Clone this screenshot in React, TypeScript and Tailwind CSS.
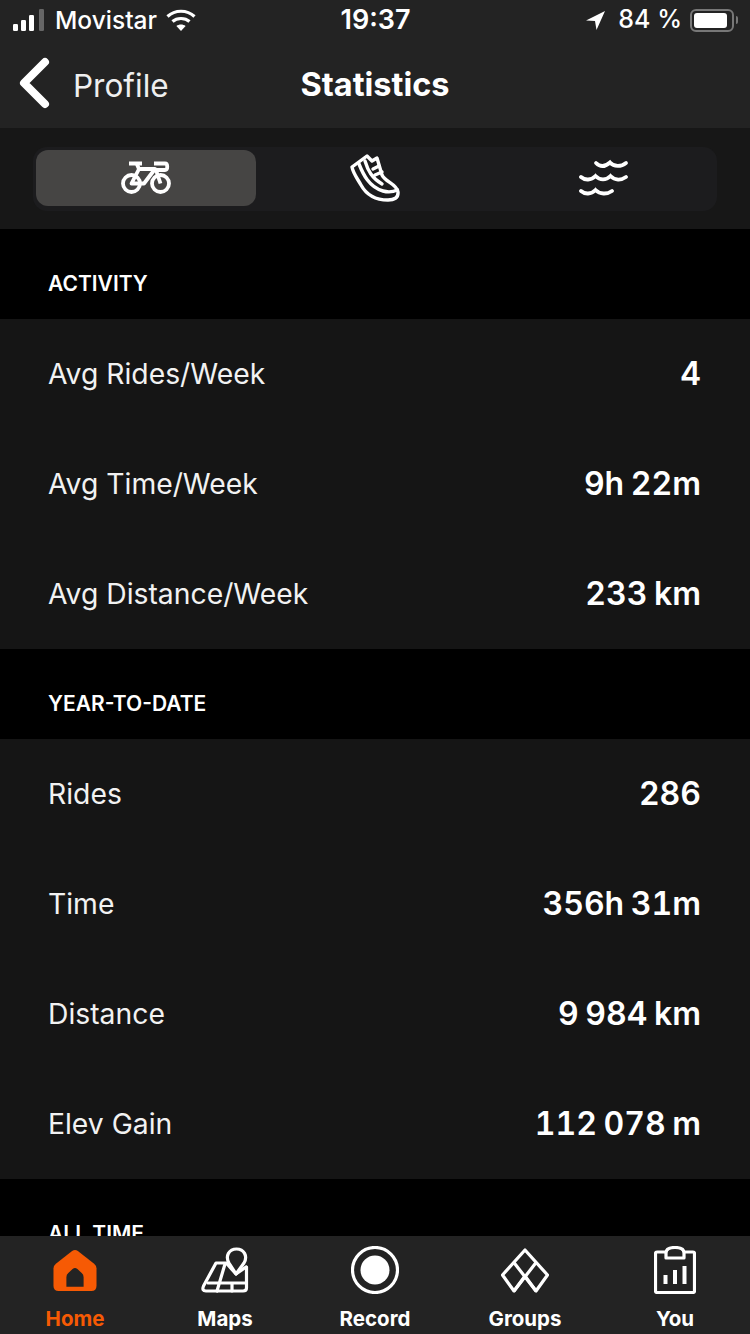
const FONT = "font-['Inter','Liberation_Sans',sans-serif]"

function SignalIcon() {
  return (
    <svg width="34" height="22" viewBox="0 0 34 22" fill="#fff">
      <rect x="0" y="15" width="5" height="7" rx="1.2" />
      <rect x="8" y="11" width="5" height="11" rx="1.2" />
      <rect x="16" y="6" width="5" height="16" rx="1.2" />
      <rect x="26" y="0" width="5" height="22" rx="1.2" fill="#666" />
    </svg>
  )
}

function WifiIcon() {
  return (
    <svg width="30" height="22" viewBox="0 0 30 22" fill="none" stroke="#fff" strokeWidth="3.2">
      <path d="M1.5 7.5C9 .5 21 .5 28.5 7.5" />
      <path d="M6.5 12.5C11 8.5 19 8.5 23.5 12.5" />
      <path d="M15 22l-4.6-5c2.5-2 6.7-2 9.200 0z" fill="#fff" stroke="none" />
    </svg>
  )
}

function LocationIcon() {
  return (
    <svg width="20" height="20" viewBox="0 0 20 20" fill="#fff">
      <path d="M19 1 L0 10.500 L9 11 L10.500 20 Z" />
    </svg>
  )
}

function BatteryIcon() {
  return (
    <div className="flex items-center gap-[2px]">
      <div className="w-[44px] h-[23px] rounded-[6px] border-2 border-[#777] p-[2px]">
        <div className="w-[33px] h-full rounded-[3px] bg-white" />
      </div>
      <div className="w-[2px] h-[8px] rounded-r-sm bg-[#777]" />
    </div>
  )
}

function BikeIcon() {
  return (
    <svg width="50" height="34" viewBox="0 0 50 34" fill="none" stroke="#fff" strokeWidth="3.8">
      <circle cx="10.500" cy="22.500" r="8.500" />
      <circle cx="39.500" cy="22.500" r="8.500" />
      <path d="M10.500 22.500 L18 8 L34 8 L23 22.500 Z" strokeLinejoin="round" />
      <path d="M8 2.500 H21 M15.500 2.500 L18 8" />
      <path d="M33 2.500 H44 C47 2.500 47 9 44 9 H35 L39.500 22.500" />
    </svg>
  )
}

function ShoeIcon() {
  return (
    <svg width="50" height="48" viewBox="0 0 50 48" fill="none" stroke="#fff" strokeWidth="3.4" strokeLinejoin="round" strokeLinecap="round">
      <path d="M2 13 L17 2 L22 7 L27 4 L32 21 C35 28 47 30 48 38 C48.500 44 44 46 38 46 C26 46 17 42 11 31 C7 24 3 19 2 13 Z" />
      <path d="M9 10 C13 20 19 33 33 37 C38 38.500 43 38 47.500 36" />
      <path d="M15 7 C18 17 22 24 32 30" />
      <path d="M23 15 L29 12 M25 21 L32 18" />
    </svg>
  )
}

function WavesIcon() {
  return (
    <svg width="50" height="38" viewBox="0 0 50 38" fill="none" stroke="#fff" strokeWidth="3.8" strokeLinecap="round">
      <path d="M17 4 C21 8 26 8 31 3.500 C35 8 42 8 47 4" />
      <path d="M2 18 C6 21.500 12 21.500 16.500 17 C21 21.500 27 21.500 31.500 17 C36 21.500 42 21.500 47 18" />
      <path d="M2 32 C6 35.500 12 35.500 16.500 31 C21 35.500 28 35.500 33 32" />
    </svg>
  )
}

function HomeIcon() {
  return (
    <svg width="44" height="43" viewBox="0 0 46 44">
      <path d="M20 1.500 Q23 -.5 26 1.500 L43 15 Q45.500 17 45.500 20 V38 Q45.500 43.500 40 43.500 H6 Q.5 43.500 .5 38 V20 Q.5 17 3 15 Z" fill="#f65a04" />
      <path d="M14 39 V29 Q14 26 16 24.500 L20.500 20.500 Q23 18.500 25.500 20.500 L30 24.500 Q32 26 32 29 V39 Z" fill="#232323" />
    </svg>
  )
}

function MapsIcon() {
  return (
    <svg width="48" height="46" viewBox="0 0 48 46" fill="none" stroke="#fff" strokeWidth="3.2" strokeLinejoin="round" strokeLinecap="round">
      <path d="M35 27 L28 16 C24 9 28 2 35.500 2 C43 2 47 9 43 16 Z" />
      <path d="M26 16 H15 L2.500 39 Q.5 44 5 44 H42 Q45.500 44 45.500 41 V20" />
      <path d="M27 18 L35 27 L45 20 M24 17 L16 44 M7 36 H45 M31 36 V44" />
    </svg>
  )
}

function RecordIcon() {
  return (
    <svg width="48" height="48" viewBox="0 0 48 48">
      <circle cx="24" cy="24" r="22.500" fill="none" stroke="#fff" strokeWidth="3.200" />
      <circle cx="24" cy="24" r="14.500" fill="#fff" />
    </svg>
  )
}

function GroupsIcon() {
  return (
    <svg width="48" height="45" viewBox="0 0 48 45" fill="none" stroke="#fff" strokeWidth="3.200" strokeLinejoin="round">
      <path d="M24 2 L46.500 27 L35 43 L24 28 L13 43 L1.500 27 Z" />
      <path d="M12.500 14 L35 43 M35.500 14 L13 43" />
    </svg>
  )
}

function YouIcon() {
  return (
    <svg width="42" height="48" viewBox="0 0 42 48" fill="none" stroke="#fff" strokeWidth="3.200" strokeLinejoin="round">
      <path d="M12 6 H3 Q1.500 6 1.500 7.500 V45 Q1.500 46.500 3 46.500 H39 Q40.500 46.500 40.500 45 V7.500 Q40.500 6 39 6 H30" />
      <path d="M12 12 V7 C12 3 16 1.500 21 1.500 C26 1.500 30 3 30 7 V12 Z" />
      <path d="M11.500 38 V29 M21 38 V24 M30.500 38 V20" strokeWidth="4" />
    </svg>
  )
}

function SectionHeader({ title }: { title: string }) {
  return (
    <div className="h-[90px] bg-black flex items-center pl-[48px] pt-[20px] text-[21px] font-semibold text-white">
      {title}
    </div>
  )
}

function StatRow({ label, value }: { label: string; value: string }) {
  return (
    <div className="h-[110px] flex items-center justify-between pl-[48px] pr-[49px]">
      <span className="text-[28.3px] text-[#f2f2f2]">{label}</span>
      <span className="text-[32px] font-semibold tabular-nums [word-spacing:-2px] text-white">{value}</span>
    </div>
  )
}

function NavItem({ label, icon, active }: { label: string; icon: React.ReactNode; active?: boolean }) {
  return (
    <div className="flex-1 flex flex-col items-center">
      <div className="h-[68px] flex items-center justify-center">{icon}</div>
      <span className={`mt-[1px] text-[20.5px] leading-[28px] font-bold ${active ? 'text-[#f65a04]' : 'text-white'}`}>
        {label}
      </span>
    </div>
  )
}

const activity = [
  { label: 'Avg Rides/Week', value: '4' },
  { label: 'Avg Time/Week', value: '9h 22m' },
  { label: 'Avg Distance/Week', value: '233 km' },
]

const ytd = [
  { label: 'Rides', value: '286' },
  { label: 'Time', value: '356h 31m' },
  { label: 'Distance', value: '9 984 km' },
  { label: 'Elev Gain', value: '112 078 m' },
]

export default function App() {
  return (
    <div className={`w-[750px] h-[1334px] flex flex-col overflow-hidden bg-black ${FONT}`}>
      <div className="h-[128px] bg-[#232323] shrink-0">
        <div className="h-[40px] flex items-center justify-between pl-[13px] pr-[12px] text-white text-[25px]">
          <div className="flex items-center w-[250px]">
            <SignalIcon />
            <span className="ml-[8px] text-[24.5px] font-medium">Movistar</span>
            <span className="ml-[9px]"><WifiIcon /></span>
          </div>
          <span className="text-[27px] font-semibold">19:37</span>
          <div className="flex items-center justify-end w-[250px]">
            <LocationIcon />
            <span className="ml-[12px] mr-[8px] font-medium">84 %</span>
            <BatteryIcon />
          </div>
        </div>
        <div className="h-[88px] relative flex items-center justify-center pt-[2px]">
          <div className="absolute left-[18px] top-[16px] flex items-center">
            <svg width="32" height="52" viewBox="0 0 32 52" fill="none" stroke="#fff" strokeWidth="8" strokeLinecap="round" strokeLinejoin="round">
              <path d="M27 5 L6 26 L27 47" />
            </svg>
            <span className="ml-[23px] mt-[6px] text-[31.5px] text-[#efefef]">Profile</span>
          </div>
          <span className="text-[32.5px] font-bold text-white">Statistics</span>
        </div>
      </div>

      <div className="h-[101px] bg-[#171717] shrink-0 flex items-center justify-center">
        <div className="w-[684px] h-[64px] rounded-[14px] bg-[#1c1c1e] flex items-start pt-[3px] pl-[3px]">
          <div className="w-[220px] h-[56px] rounded-[12px] bg-[#464544] flex items-center justify-center">
            <BikeIcon />
          </div>
          <div className="w-[238px] h-[56px] flex items-center justify-center"><ShoeIcon /></div>
          <div className="w-[220px] h-[56px] flex items-center justify-center"><WavesIcon /></div>
        </div>
      </div>

      <div className="flex-1 min-h-0 overflow-hidden">
        <SectionHeader title="ACTIVITY" />
        <div className="bg-[#151515]">
          {activity.map(r => <StatRow key={r.label} label={r.label} value={r.value} />)}
        </div>
        <SectionHeader title="YEAR-TO-DATE" />
        <div className="bg-[#151515]">
          {ytd.map(r => <StatRow key={r.label} label={r.label} value={r.value} />)}
        </div>
        <SectionHeader title="ALL TIME" />
      </div>

      <div className="h-[98px] bg-[#232323] shrink-0 flex">
        <NavItem label="Home" icon={<HomeIcon />} active />
        <NavItem label="Maps" icon={<MapsIcon />} />
        <NavItem label="Record" icon={<RecordIcon />} />
        <NavItem label="Groups" icon={<GroupsIcon />} />
        <NavItem label="You" icon={<YouIcon />} />
      </div>
    </div>
  )
}
